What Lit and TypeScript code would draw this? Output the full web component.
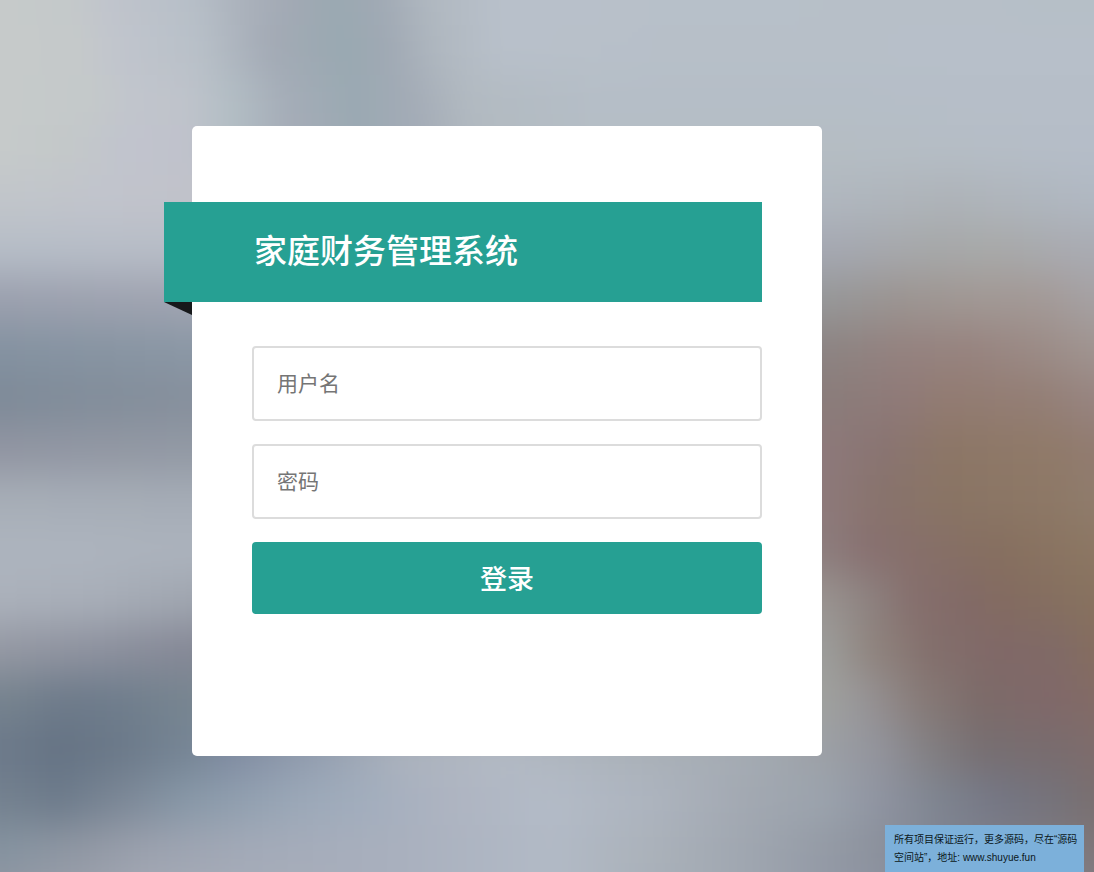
import { LitElement, html, svg, css } from "lit";
import { customElement } from "lit/decorators.js";

/* Each band is a horizontal run of "x colour" stops; bands are 50 units apart. */
const BANDS: string[] = [
  "0 c6caca,70 c4c9ca,110 c0c4cc,190 b7bfc8,250 a9b0ba,290 a2a9b4,335 9aa9b1,380 a0a9b4,430 b0b8c0,500 b8c0ca,1094 b6bfc7",
  "0 c6caca,80 c5c9ca,115 c1c5cd,200 b8c0c8,270 a3aab5,345 99a9b1,390 a0a9b4,440 b0b8c0,500 b8c0ca,700 b7bfc8,1094 b7bfc9",
  "0 c6caca,90 c4c9ca,130 c1c5cc,185 bfc3cb,230 b3bec5,290 a4acb7,355 9aa9b2,410 a3abb6,470 b2bac1,600 b5bec7,800 b5bec7,1094 b6bec8",
  "0 c6caca,70 c3c8c9,120 c1c4cd,185 c0c2cc,230 b3bec3,290 a6adb8,360 9ba9b3,420 a3abb6,480 b1b9c0,600 b5bec5,825 b5bdc3,950 b5bdc5,1094 b5bdc8",
  "0 c1c5ca,100 c1c4cc,190 c1c2ca,825 b0b7bf,950 aeb3b8,1094 b0b8c2",
  "0 b6bdc7,190 b7bdc7,825 a5a8b2,930 a6a8a9,1000 a8a9a9,1094 a9abb3",
  "0 9ba0ae,190 a0a4b1,825 969798,900 9b9491,960 a09793,1040 a39996,1094 a5a1a3",
  "0 8492a1,100 8794a2,190 8a97a5,825 8c8382,900 94827f,970 97837f,1040 9b8b86,1094 a09490",
  "0 7e8a98,100 828d9a,190 868f9c,825 8a7c7a,900 8f7a78,950 927b71,1040 937e75,1094 978480",
  "0 9195a2,190 9299a4,825 8d797a,880 897472,950 8c7666,1050 907a69,1094 917b70",
  "0 a7aeb7,190 a5acb6,825 8d797a,880 88736c,950 897464,1050 8d7866,1094 8f7c6c",
  "0 adb4be,190 acb3bd,825 8c7c7c,870 887070,930 866f68,1000 866f5f,1094 8c7763",
  "0 abb1bb,100 a8aeb8,190 a0a6b0,825 999390,870 8d8280,910 86706e,960 826a67,1010 836b60,1094 87725f",
  "0 9498a3,100 8d919e,190 858896,825 9c9d9b,870 90857f,930 836f6c,1000 806867,1060 806a66,1094 856d5f",
  "0 76838e,70 6d7a8a,120 6f7d8c,190 778590,825 a0a19e,860 989698,920 877b78,980 7c6b69,1050 806869,1094 826b66",
  "0 6c798a,60 657384,120 6b7989,190 768595,230 7f8ba1,320 949fb0,400 abb2bd,500 b3bac4,650 aab1b8,750 a4abb3,825 9ca0a6,880 92939b,930 827f82,980 776f72,1050 786c6e,1094 7e6c6c",
  "0 74818f,60 6d7b8b,120 7b8796,190 8898a8,300 9ba8b8,360 a1adbd,450 aeb4c1,550 b3bbc7,650 adb4bf,750 a2a8b1,825 9ba3ad,880 8f94a1,940 7e8490,1000 747684,1060 757279,1094 796f70",
  "0 8593a0,80 9198a4,150 9ca2af,250 a3aab8,400 a9b0be,550 b2bac6,650 abb2ba,750 9fa6b0,850 9096a1,950 7f8390,1094 7f777a",
  "0 9297a3,150 a6abb6,400 a9b0be,550 b2bac6,750 9fa6b0,950 83889a,1094 827f86",
];

@customElement("blurred-backdrop")
export class BlurredBackdrop extends LitElement {
  static styles = css`
    :host {
      display: block;
      overflow: hidden;
    }
    .scene {
      display: block;
      width: 100%;
      height: 100%;
    }
  `;

  render() {
    return html`
      <svg class="scene" viewBox="0 0 1094 872" preserveAspectRatio="none" aria-hidden="true">
        <defs>
          <filter id="soft" filterUnits="userSpaceOnUse" x="-100" y="-100" width="1294" height="1072"
            color-interpolation-filters="sRGB">
            <feGaussianBlur stdDeviation="10 19" />
          </filter>
          ${BANDS.map(
            (band, i) => svg`
              <linearGradient id=${`band${i}`} gradientUnits="userSpaceOnUse" x1="0" y1="0" x2="1094" y2="0">
                ${band.split(",").map((stop) => {
                  const [x, color] = stop.split(" ");
                  return svg`<stop offset=${Number(x) / 1094} stop-color=${`#${color}`} />`;
                })}
              </linearGradient>`
          )}
        </defs>
        <g filter="url(#soft)">
          ${BANDS.map((_, i) => {
            const top = i === 0 ? -100 : i * 50 - 25;
            const bottom = i === BANDS.length - 1 ? 972 : i * 50 + 26;
            return svg`<rect x="-100" y=${top} width="1294" height=${bottom - top} fill=${`url(#band${i})`} />`;
          })}
        </g>
      </svg>
    `;
  }
}

@customElement("app-root")
export class AppRoot extends LitElement {
  static styles = css`
    :host {
      display: block;
      position: relative;
      min-height: 100vh;
      box-sizing: border-box;
      font-family: "Liberation Sans", "Noto Sans CJK SC", sans-serif;
    }
    *,
    *::before,
    *::after {
      box-sizing: border-box;
    }
    .backdrop {
      position: absolute;
      inset: 0;
    }
    .page {
      position: relative;
      display: flex;
      justify-content: center;
      padding: 126px 80px 40px 0;
    }
    .card {
      width: 100%;
      max-width: 630px;
      min-height: 630px;
      padding: 76px 60px;
      background: #fff;
      border-radius: 5px;
    }
    .ribbon {
      position: relative;
      display: flex;
      align-items: center;
      height: 100px;
      margin: 0 0 44px -88px;
      padding: 0 90px;
      background: #26a093;
    }
    .ribbon::after {
      content: "";
      position: absolute;
      top: 100%;
      left: 0;
      width: 28px;
      height: 13px;
      background: #17191b;
      clip-path: polygon(0 0, 100% 0, 100% 100%);
    }
    .title {
      margin: 0;
      color: #fff;
      font-size: 33px;
      font-weight: 500;
      line-height: 48px;
    }
    .form {
      display: flex;
      flex-direction: column;
      gap: 23px;
    }
    .input {
      display: block;
      width: 100%;
      height: 75px;
      margin: 0;
      padding: 0 23px;
      border: 2px solid #dcdcdc;
      border-radius: 4px;
      outline: none;
      background: #fff;
      color: #333;
      font-family: inherit;
      font-size: 21px;
    }
    .input::placeholder {
      color: #757575;
      opacity: 1;
    }
    .submit {
      height: 72px;
      padding: 0;
      border: 0;
      border-radius: 4px;
      background: #26a093;
      color: #fff;
      font-family: "Noto Sans CJK SC", sans-serif;
      font-size: 27px;
      font-weight: 500;
      line-height: 40px;
      cursor: pointer;
    }
    .notice {
      position: absolute;
      right: 10px;
      bottom: 0;
      width: 199px;
      margin: 0;
      padding: 6px 4px 5px 9px;
      background: #7cb0da;
      color: #0b1720;
      font-size: 10px;
      line-height: 18px;
    }
  `;

  render() {
    return html`
      <blurred-backdrop class="backdrop"></blurred-backdrop>
      <main class="page">
        <section class="card">
          <header class="ribbon"><h1 class="title">家庭财务管理系统</h1></header>
          <form class="form" @submit=${(e: Event) => e.preventDefault()}>
            <input class="input" type="text" placeholder="用户名" aria-label="用户名" autocomplete="username" />
            <input class="input" type="password" placeholder="密码" aria-label="密码" autocomplete="current-password" />
            <button class="submit" type="submit">登录</button>
          </form>
        </section>
      </main>
      <p class="notice">所有项目保证运行，更多源码，尽在“源码空间站”，地址: www.shuyue.fun</p>
    `;
  }
}
